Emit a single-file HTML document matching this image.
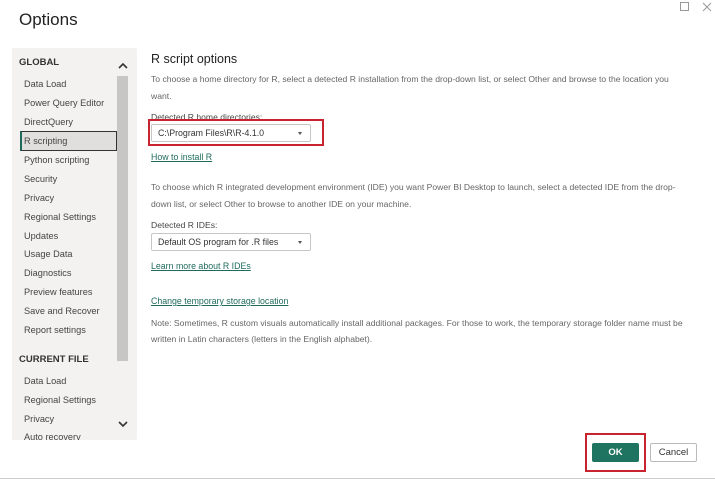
<!DOCTYPE html>
<html><head><style>
*{margin:0;padding:0;box-sizing:border-box}
body{width:715px;height:481px;background:#fff;font-family:"Liberation Sans",sans-serif;position:relative;overflow:hidden;color:#333}
.a{position:absolute;white-space:nowrap}
.side{position:absolute;left:12px;top:48px;width:125px;height:392px;background:#f3f2f1;border-radius:2px}
.it{position:absolute;left:24px;font-size:9.2px;color:#444}
.h{position:absolute;left:19px;font-size:9.5px;font-weight:bold;color:#333}
.t{font-size:8.6px;color:#666}
.lnk{font-size:8.8px;color:#1f6b5b;text-decoration:underline}
.dd{position:absolute;left:151px;width:160px;height:18px;border:1px solid #c8c6c4;border-radius:2px;background:#fff;font-size:8.8px;color:#333;padding:3px 6px}
.dd::after{content:"";position:absolute;right:8px;top:7px;border:2.5px solid transparent;border-top:3px solid #555}
</style></head><body>
<div class="a" style="left:19px;top:10px;font-size:17px;color:#222">Options</div>
<div class="a" style="left:680px;top:2px;width:9px;height:9px;border:1px solid #999"></div>
<svg class="a" style="left:702px;top:2px" width="10" height="10"><path d="M1 1L9 9M9 1L1 9" stroke="#999" stroke-width="1"/></svg>
<div class="side"></div>
<div class="a" style="left:117px;top:76px;width:11px;height:285px;background:#c8c6c4"></div>
<svg class="a" style="left:118px;top:62px" width="10" height="8"><path d="M1 6L5 2L9 6" stroke="#333" stroke-width="1.6" fill="none"/></svg>
<svg class="a" style="left:118px;top:420px" width="10" height="8"><path d="M1 2L5 6L9 2" stroke="#333" stroke-width="1.6" fill="none"/></svg>
<div class="h" style="top:57px">GLOBAL</div>
<div class="it" style="top:79px">Data Load</div>
<div class="it" style="top:98px">Power Query Editor</div>
<div class="it" style="top:117px">DirectQuery</div>
<div class="a" style="left:20px;top:131px;width:97px;height:20px;border:1px solid #333;border-left:2px solid #1f6b5b;background:#e1dfdd"></div>
<div class="it" style="top:136px">R scripting</div>
<div class="it" style="top:155px">Python scripting</div>
<div class="it" style="top:174px">Security</div>
<div class="it" style="top:193px">Privacy</div>
<div class="it" style="top:212px">Regional Settings</div>
<div class="it" style="top:231px">Updates</div>
<div class="it" style="top:249px">Usage Data</div>
<div class="it" style="top:268px">Diagnostics</div>
<div class="it" style="top:287px">Preview features</div>
<div class="it" style="top:306px">Save and Recover</div>
<div class="it" style="top:325px">Report settings</div>
<div class="h" style="top:354px">CURRENT FILE</div>
<div class="it" style="top:376px">Data Load</div>
<div class="it" style="top:395px">Regional Settings</div>
<div class="it" style="top:414px">Privacy</div>
<div class="it" style="top:432px;height:8px;overflow:hidden">Auto recovery</div>

<div class="a" style="left:151px;top:52px;font-size:12.5px;color:#222">R script options</div>
<div class="a t" style="left:151px;top:74px">To choose a home directory for R, select a detected R installation from the drop-down list, or select Other and browse to the location you</div>
<div class="a t" style="left:151px;top:91px">want.</div>
<div class="a t" style="left:151px;top:112px;color:#444">Detected R home directories:</div>
<div class="a" style="left:148px;top:119px;width:176px;height:27px;border:2px solid #c7242f"></div>
<div class="dd" style="top:124px">C:\Program Files\R\R-4.1.0</div>
<div class="a lnk" style="left:151px;top:152px">How to install R</div>
<div class="a t" style="left:151px;top:182px">To choose which R integrated development environment (IDE) you want Power BI Desktop to launch, select a detected IDE from the drop-</div>
<div class="a t" style="left:151px;top:199px">down list, or select Other to browse to another IDE on your machine.</div>
<div class="a t" style="left:151px;top:220px;color:#444">Detected R IDEs:</div>
<div class="dd" style="top:233px">Default OS program for .R files</div>
<div class="a lnk" style="left:151px;top:261px">Learn more about R IDEs</div>
<div class="a lnk" style="left:151px;top:296px">Change temporary storage location</div>
<div class="a t" style="left:151px;top:318px">Note: Sometimes, R custom visuals automatically install additional packages. For those to work, the temporary storage folder name must be</div>
<div class="a t" style="left:151px;top:334px">written in Latin characters (letters in the English alphabet).</div>

<div class="a" style="left:585px;top:433px;width:61px;height:39px;border:2px solid #c7242f"></div>
<div class="a" style="left:592px;top:443px;width:47px;height:19px;background:#1e7460;border-radius:2px;color:#fff;font-size:9.5px;font-weight:bold;text-align:center;line-height:19px">OK</div>
<div class="a" style="left:650px;top:443px;width:47px;height:19px;border:1px solid #bbb;border-radius:2px;color:#333;font-size:9.5px;text-align:center;line-height:17px">Cancel</div>
<div class="a" style="left:0;top:478px;width:715px;height:1px;background:#ccc"></div>
</body></html>
